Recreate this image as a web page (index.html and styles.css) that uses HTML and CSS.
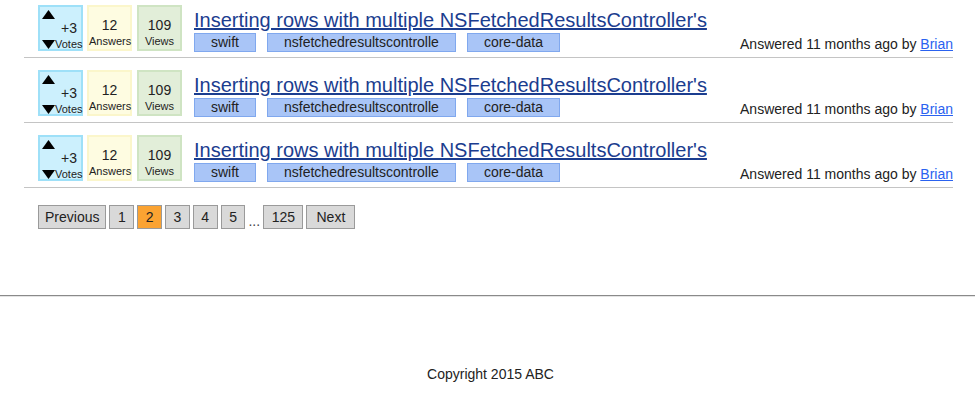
FILE: index.html
```html
<!DOCTYPE html>
<html>
<head>
<meta charset="utf-8">
<link rel="stylesheet" href="styles.css">
</head>
<body>
<div class="questions">
  <div class="row">
    <div class="stats">
      <div class="stat votes">
        <div class="up"><svg width="13" height="9" viewBox="0 0 13 9"><polygon points="6.5,0 13,9 0,9" fill="#000"/></svg></div>
        <div class="count">+3</div>
        <div class="vline"><svg width="13" height="9" viewBox="0 0 13 9"><polygon points="0,0 13,0 6.5,9" fill="#000"/></svg><span>Votes</span></div>
      </div>
      <div class="stat answers"><div class="num">12</div><div class="lbl">Answers</div></div>
      <div class="stat views"><div class="num">109</div><div class="lbl">Views</div></div>
    </div>
    <div class="main">
      <a class="title" href="#">Inserting rows with multiple NSFetchedResultsController's</a>
      <div class="meta">
        <div class="tags"><span class="tag">swift</span><span class="tag">nsfetchedresultscontrolle</span><span class="tag">core-data</span></div>
        <div class="answered">Answered 11 months ago by <a href="#">Brian</a></div>
      </div>
    </div>
  </div>
  <div class="row">
    <div class="stats">
      <div class="stat votes">
        <div class="up"><svg width="13" height="9" viewBox="0 0 13 9"><polygon points="6.5,0 13,9 0,9" fill="#000"/></svg></div>
        <div class="count">+3</div>
        <div class="vline"><svg width="13" height="9" viewBox="0 0 13 9"><polygon points="0,0 13,0 6.5,9" fill="#000"/></svg><span>Votes</span></div>
      </div>
      <div class="stat answers"><div class="num">12</div><div class="lbl">Answers</div></div>
      <div class="stat views"><div class="num">109</div><div class="lbl">Views</div></div>
    </div>
    <div class="main">
      <a class="title" href="#">Inserting rows with multiple NSFetchedResultsController's</a>
      <div class="meta">
        <div class="tags"><span class="tag">swift</span><span class="tag">nsfetchedresultscontrolle</span><span class="tag">core-data</span></div>
        <div class="answered">Answered 11 months ago by <a href="#">Brian</a></div>
      </div>
    </div>
  </div>
  <div class="row">
    <div class="stats">
      <div class="stat votes">
        <div class="up"><svg width="13" height="9" viewBox="0 0 13 9"><polygon points="6.5,0 13,9 0,9" fill="#000"/></svg></div>
        <div class="count">+3</div>
        <div class="vline"><svg width="13" height="9" viewBox="0 0 13 9"><polygon points="0,0 13,0 6.5,9" fill="#000"/></svg><span>Votes</span></div>
      </div>
      <div class="stat answers"><div class="num">12</div><div class="lbl">Answers</div></div>
      <div class="stat views"><div class="num">109</div><div class="lbl">Views</div></div>
    </div>
    <div class="main">
      <a class="title" href="#">Inserting rows with multiple NSFetchedResultsController's</a>
      <div class="meta">
        <div class="tags"><span class="tag">swift</span><span class="tag">nsfetchedresultscontrolle</span><span class="tag">core-data</span></div>
        <div class="answered">Answered 11 months ago by <a href="#">Brian</a></div>
      </div>
    </div>
  </div>
</div>
<div class="pagination">
  <a class="page prev" href="#">Previous</a>
  <a class="page" href="#">1</a>
  <a class="page active" href="#">2</a>
  <a class="page" href="#">3</a>
  <a class="page" href="#">4</a>
  <a class="page" href="#">5</a>
  <span class="dots">...</span>
  <a class="page" href="#">125</a>
  <a class="page next" href="#">Next</a>
</div>
<div class="footer">
  <div class="rule"></div>
  <p class="copy">Copyright 2015 ABC</p>
</div>
</body>
</html>
```
FILE: styles.css
```css
html, body {
  margin: 0;
  padding: 0;
  background: #fff;
}
body {
  font-family: "Liberation Sans", Arial, sans-serif;
  color: #222;
  font-size: 14px;
}
.questions {
  margin-left: 24px;
  width: 929px;
}
.row {
  display: flex;
  align-items: flex-start;
  padding: 12px 0 5px 14px;
  border-bottom: 1px solid #c4c4c4;
}
.row:first-child {
  padding-top: 5px;
}
.stats {
  display: flex;
  gap: 4px;
}
.stat {
  box-sizing: border-box;
  width: 45px;
  height: 46px;
  border: 2px solid;
  text-align: center;
  white-space: nowrap;
}
.votes {
  background: #ccf0fd;
  border-color: #9ee0f8;
  text-align: left;
  padding-left: 2px;
}
.answers {
  background: #fefce1;
  border-color: #fbf6cb;
  padding-top: 11px;
}
.views {
  background: #e2eed9;
  border-color: #cfe4c3;
  padding-top: 11px;
  margin-left: 1px;
}
.up {
  height: 11px;
}
.up svg {
  display: block;
  margin-top: 3px;
}
.count, .num {
  font-size: 14px;
  line-height: 15px;
  height: 17px;
}
.count {
  padding-left: 19px;
}
.vline {
  display: flex;
  align-items: flex-end;
  height: 13px;
  font-size: 11px;
  line-height: 13px;
}
.vline svg {
  display: block;
  margin-bottom: 2px;
  flex: none;
}
.lbl {
  font-size: 11px;
  line-height: 13px;
}
.main {
  flex: 1;
  margin-left: 12px;
  padding-top: 4px;
  display: flex;
  flex-direction: column;
}
.title {
  font-size: 20px;
  line-height: 23px;
  color: #1b3d8f;
  text-decoration: underline;
  margin-bottom: 1px;
  align-self: flex-start;
}
.meta {
  display: flex;
  justify-content: space-between;
  align-items: flex-end;
}
.tags {
  display: flex;
  gap: 11px;
}
.tag {
  background: #a9c5f7;
  border: 1px solid #80a8ee;
  padding: 0 16px;
  line-height: 17px;
  font-size: 14px;
  color: #222;
}
.answered {
  font-size: 14px;
  line-height: 16px;
}
.answered a {
  color: #2a62f0;
}
.pagination {
  display: flex;
  align-items: flex-end;
  gap: 3px;
  margin: 17px 0 0 38px;
}
.page {
  box-sizing: border-box;
  height: 24px;
  line-height: 22px;
  padding: 0 7.5px;
  border: 1px solid #9a9a9a;
  background: #d9d9d9;
  color: #222;
  text-decoration: none;
  font-size: 14px;
}
.page.prev {
  padding: 0 6px;
}
.page.next {
  padding: 0 9px;
}
.page.active {
  background: #fba332;
}
.dots {
  font-size: 14px;
  line-height: 16px;
  color: #444;
}
.footer {
  margin-top: 66px;
}
.rule {
  border-top: 1px solid #8a8a8a;
  border-bottom: 1px solid #e4e4e4;
}
.copy {
  margin: 69px 0 0;
  padding-left: 6px;
  text-align: center;
  font-size: 14px;
  line-height: 16px;
  color: #222;
}
```
